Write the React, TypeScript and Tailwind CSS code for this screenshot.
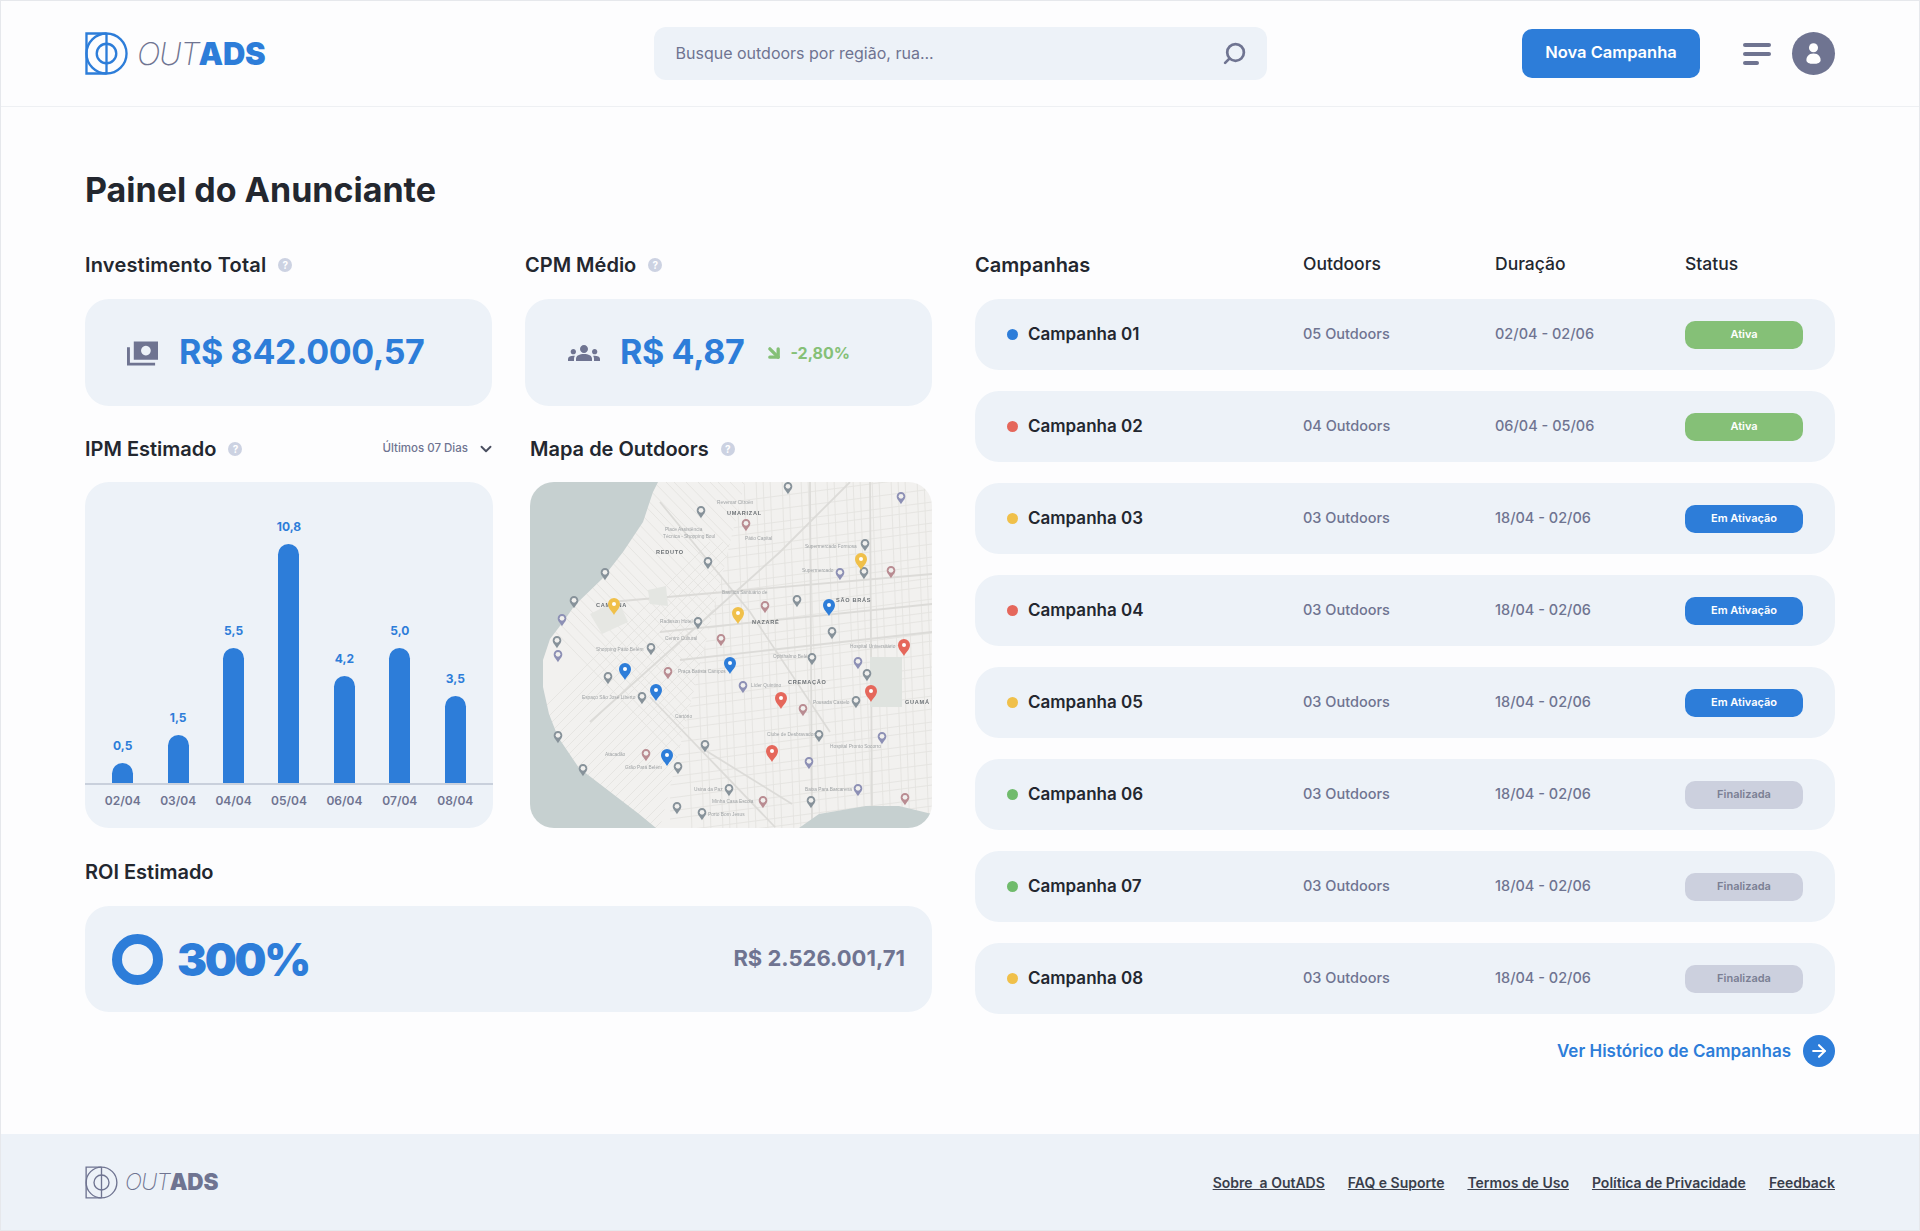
import React from 'react';
import { ArrowDownRight, ArrowRight, ChevronDown, Search } from 'lucide-react';
import { MdGroups } from 'react-icons/md';

const campaigns = [
  { name: 'Campanha 01', dot: 'bg-[#2d7dd9]', outdoors: '05 Outdoors', period: '02/04 - 02/06', status: 'Ativa' },
  { name: 'Campanha 02', dot: 'bg-[#e5675b]', outdoors: '04 Outdoors', period: '06/04 - 05/06', status: 'Ativa' },
  { name: 'Campanha 03', dot: 'bg-[#f0c04a]', outdoors: '03 Outdoors', period: '18/04 - 02/06', status: 'Em Ativação' },
  { name: 'Campanha 04', dot: 'bg-[#e5675b]', outdoors: '03 Outdoors', period: '18/04 - 02/06', status: 'Em Ativação' },
  { name: 'Campanha 05', dot: 'bg-[#f0c04a]', outdoors: '03 Outdoors', period: '18/04 - 02/06', status: 'Em Ativação' },
  { name: 'Campanha 06', dot: 'bg-[#70bb6c]', outdoors: '03 Outdoors', period: '18/04 - 02/06', status: 'Finalizada' },
  { name: 'Campanha 07', dot: 'bg-[#70bb6c]', outdoors: '03 Outdoors', period: '18/04 - 02/06', status: 'Finalizada' },
  { name: 'Campanha 08', dot: 'bg-[#f0c04a]', outdoors: '03 Outdoors', period: '18/04 - 02/06', status: 'Finalizada' },
];

const statusStyle: Record<string, string> = {
  Ativa: 'bg-[#85c077] text-white',
  'Em Ativação': 'bg-[#2d7dd9] text-white',
  Finalizada: 'bg-[#ccd0de] text-[#7b7f94]',
};

const bars = [
  { value: '0,5', date: '02/04', height: 20 },
  { value: '1,5', date: '03/04', height: 48 },
  { value: '5,5', date: '04/04', height: 135 },
  { value: '10,8', date: '05/04', height: 239 },
  { value: '4,2', date: '06/04', height: 107 },
  { value: '5,0', date: '07/04', height: 135 },
  { value: '3,5', date: '08/04', height: 87 },
];

const footerLinks = ['Sobre\u00a0 a OutADS', 'FAQ e Suporte', 'Termos de Uso', 'Política de Privacidade', 'Feedback'];

const colorPins: [number, number, string][] = [
  [84, 123, '#f0c04a'], [208, 132, '#f0c04a'], [331, 78, '#f0c04a'],
  [299, 124, '#2d7dd9'], [95, 188, '#2d7dd9'], [126, 209, '#2d7dd9'], [200, 182, '#2d7dd9'], [137, 274, '#2d7dd9'],
  [374, 164, '#e5675b'], [251, 217, '#e5675b'], [341, 210, '#e5675b'], [242, 270, '#e5675b'],
];

const greyPins: [number, number][] = [
  [258, 5], [371, 15], [171, 29], [216, 42], [335, 62], [178, 80], [310, 91], [334, 90], [361, 89], [75, 91],
  [44, 119], [32, 137], [267, 118], [235, 124], [168, 140], [27, 159], [28, 173], [121, 166], [191, 157], [302, 150],
  [282, 176], [328, 180], [337, 192], [138, 190], [78, 195], [112, 215], [213, 204], [326, 219], [273, 227], [28, 254],
  [289, 253], [352, 255], [175, 263], [116, 272], [148, 285], [53, 287], [279, 280], [199, 307], [233, 319], [147, 325],
  [172, 331], [328, 307], [281, 319], [375, 316],
];
const greyPinColors = ['#87929a', '#8d90b5', '#87929a', '#b98c92', '#87929a'];

const mapLabels: [number, number, string, boolean][] = [
  [197, 33, 'UMARIZAL', true], [126, 72, 'REDUTO', true], [66, 125, 'CAMPINA', true], [222, 142, 'NAZARÉ', true],
  [306, 120, 'SÃO BRÁS', true], [258, 202, 'CREMAÇÃO', true], [375, 222, 'GUAMÁ', true],
  [187, 22, 'Revemar Citroën', false], [135, 49, 'Place Assistência', false], [133, 56, 'Técnica - Shopping Boul', false],
  [215, 58, 'Pátio Capital', false], [275, 66, 'Supermercado Formosa', false], [272, 90, 'Supermercado', false],
  [192, 112, 'Basílica Santuário de', false], [130, 141, 'Radisson Hotel', false], [135, 158, 'Centro Cultural', false],
  [66, 169, 'Shopping Pátio Belém', false], [243, 176, 'Ophthalmo Belém', false], [320, 166, 'Hospital Universitário', false],
  [148, 191, 'Praça Batista Campos', false], [221, 205, 'Líder Quintino', false], [283, 222, 'Pousada Castelo', false],
  [237, 254, 'Clube de Desbravadores', false], [300, 266, 'Hospital Pronto Socorro', false], [52, 217, 'Espaço São José Liberto', false],
  [145, 236, 'Cartório', false], [75, 274, 'Atacadão', false], [95, 287, 'Grão Pará Belém', false], [275, 309, 'Baixa Para Barcarena', false],
  [164, 309, 'Usina da Paz', false], [182, 321, 'Minha Casa Escola', false], [178, 334, 'Porto Bom Jesus', false],
];

// street grid: rotated blocks on the old town side, almost straight ones to the east
const westStreets = Array.from({ length: 44 }, (_, i) => {
  const offset = -120 + i * 10 + (i * 7) % 4;
  return `M${offset} 360L${offset + 300} 60`;
});
const westCross = Array.from({ length: 40 }, (_, i) => {
  const offset = -120 + i * 11 + (i * 5) % 4;
  return `M${offset} 0L${offset + 330} 340`;
});
const eastStreets = Array.from({ length: 32 }, (_, i) => {
  const x = 150 + i * 9 + (i * 3) % 5;
  return `M${x} -5L${x + 12} 350`;
});
const eastCross = Array.from({ length: 32 }, (_, i) => {
  const y = 8 + i * 11 + (i * 7) % 5;
  return `M140 ${y + 20}L410 ${y - 15}`;
});

function HelpDot() {
  return (
    <span className="flex h-[14px] w-[14px] items-center justify-center rounded-full bg-[#ccd2e2] text-[10px] leading-none font-bold text-white">
      ?
    </span>
  );
}

function Logo({ small }: { small?: boolean }) {
  const color = small ? '#6f7491' : '#2d7dd9';
  return (
    <div className={`flex items-center ${small ? 'gap-[7px]' : 'gap-[9px]'}`}>
      <svg viewBox="0 0 44 44" className={small ? 'h-[33px] w-[33px]' : 'h-[43px] w-[43px]'} fill="none" stroke={color} strokeWidth={small ? 1.8 : 2.4}>
        <path d="M22 1.500H1.500V42.500H22" />
        <circle cx="22" cy="22" r="20.500" />
        <circle cx="22" cy="22" r="10" />
        <path d="M22 1.500V42.500" />
      </svg>
      <span className={`flex items-baseline leading-none italic ${small ? 'text-[22.500px]' : 'text-[31px]'}`}>
        <span className="font-extralight tracking-[-0.04em] text-[#6f7491]">OUT</span>
        <span className={`font-black not-italic tracking-[-0.01em] ${small ? 'text-[#6f7491]' : 'text-[#2d7dd9]'}`}>ADS</span>
      </span>
    </div>
  );
}

function BillsIcon() {
  return (
    <svg viewBox="0 0 32 26" className="h-[26px] w-[31px]" fill="#6f7491">
      <path fillRule="evenodd" d="M7 1h25v19H7ZM19.500 5.500a5 5 0 1 0 .01 0Z" />
      <path d="M0 7h3v16h26v3H0Z" />
    </svg>
  );
}

function CityMap() {
  return (
    <svg viewBox="0 0 402 346" className="h-full w-full blur-[0.3px]" preserveAspectRatio="none">
      <defs>
        <clipPath id="westSide"><path d="M0 0H215L130 346H0Z" /></clipPath>
        <clipPath id="eastSide"><path d="M215 0H402V346H130Z" /></clipPath>
      </defs>
      <rect width="402" height="346" fill="#f2f1ef" />
      <g stroke="#e4e3e0" strokeWidth="0.9" fill="none">
        <g clipPath="url(#westSide)">
          {westStreets.map((d) => <path key={d} d={d} />)}
          {westCross.map((d) => <path key={d} d={d} />)}
        </g>
        <g clipPath="url(#eastSide)">
          {eastStreets.map((d) => <path key={d} d={d} />)}
          {eastCross.map((d) => <path key={d} d={d} />)}
        </g>
      </g>
      <g stroke="#dcdbd8" strokeWidth="1.800" fill="none">
        <path d="M130 20 220 130 300 250" />
        <path d="M80 120 402 92" />
        <path d="M130 150 402 122" />
        <path d="M150 178 402 150" />
        <path d="M60 240 250 70 320 0" />
        <path d="M170 265 262 322" />
        <path d="M280 0 282 346" />
        <path d="M340 0 342 330" />
        <path d="M120 215 245 345" />
      </g>
      <path d="M340 175H372V225H340Z" fill="#dfe3df" />
      <path d="M60 132 88 118 98 140 72 152Z" fill="#e6e7e3" />
      <path d="M118 108 136 104 138 124 120 122Z" fill="#e4e6e2" />
      <path d="M0 0H128L123 10 113 40 93 70 72 97 45 123 33 140 20 157 13 178 13 205 19 232 28 255 49 286 79 309 109 332 126 346H0Z" fill="#c6d0d0" />
      <path d="M269 346 289 332 336 324 369 324 402 332V346Z" fill="#c6d0d0" />
      {mapLabels.map(([x, y, text, major]) => (
        <text
          key={text}
          x={x}
          y={y}
          fontFamily="'Liberation Sans', sans-serif"
          fontSize={major ? 5.6 : 4.8}
          fontWeight={major ? 700 : 400}
          letterSpacing={major ? 0.7 : 0}
          fill={major ? '#6d7276' : '#a0a4a6'}
        >
          {text}
        </text>
      ))}
      {greyPins.map(([x, y], i) => (
        <g key={`${x}-${y}`} transform={`translate(${x} ${y}) scale(0.72)`}>
          <path d="M0 10C-2 6-6 3.500-6-1A6 6 0 1 1 6-1C6 3.500 2 6 0 10Z" fill={greyPinColors[i % 5]} />
          <circle cy="-1" r="3.300" fill="#f1f0ee" />
        </g>
      ))}
      {colorPins.map(([x, y, fill]) => (
        <g key={`${x}-${y}`} transform={`translate(${x} ${y})`}>
          <path d="M0 10C-2 6-6 3.500-6-1A6 6 0 1 1 6-1C6 3.500 2 6 0 10Z" fill={fill} />
          <circle cy="-1" r="2" fill="#fff" />
        </g>
      ))}
    </svg>
  );
}

export default function App() {
  return (
    <div className="flex min-h-[1231px] flex-col border border-[#e6e8ec] bg-[#fdfdfe] font-['Inter',sans-serif] text-[#23272f]">
      <header className="grid h-[106px] shrink-0 grid-cols-[1fr_613px_1fr] items-center border-b border-[#eef0f3] px-[84px]">
        <Logo />
        <div className="flex h-[53px] items-center justify-between rounded-xl bg-[#edf2f8] pr-[20px] pl-[22px]">
          <span className="pb-[1px] text-[16px] text-[#6f7491]">Busque outdoors por região, rua...</span>
          <Search className="h-[25px] w-[25px] -scale-x-100 text-[#6f7491]" strokeWidth={2.6} />
        </div>
        <div className="flex items-center justify-end">
          <button className="h-[49px] w-[178px] rounded-[10px] bg-[#2d7dd9] pb-[2px] text-[16.500px] font-semibold text-white">Nova Campanha</button>
          <div className="mr-[21px] ml-[43px] flex w-[28px] flex-col gap-[5px]">
            <span className="h-[4px] w-[28px] rounded-full bg-[#6f7491]" />
            <span className="h-[4px] w-[28px] rounded-full bg-[#6f7491]" />
            <span className="h-[4px] w-[16px] rounded-full bg-[#6f7491]" />
          </div>
          <div className="flex h-[43px] w-[43px] items-center justify-center rounded-full bg-[#6f7491]">
            <svg viewBox="0 0 24 24" className="h-[31px] w-[31px]" fill="#fff">
              <circle cx="12" cy="7.500" r="3.500" />
              <path d="M12 12c4 0 5.500 2.800 5.500 5 0 2-2 3-5.500 3s-5.500-1-5.500-3c0-2.200 1.500-5 5.500-5Z" />
            </svg>
          </div>
        </div>
      </header>

      <main className="px-[84px] pt-[61px]">
        <h1 className="mb-[37px] h-[44px] text-[34px] leading-[44px] font-bold">Painel do Anunciante</h1>
        <div className="grid grid-cols-[847px_860px] gap-x-[43px]">
          <div>
            <div className="grid grid-cols-[407px_407px] gap-x-[33px]">
              <section>
                <h2 className="mb-[18px] flex h-[32px] items-center gap-[12px] text-[20px] font-semibold tracking-[0.01em]">Investimento Total <HelpDot /></h2>
                <div className="flex h-[107px] items-center rounded-3xl bg-[#edf2f8] pl-[42px]">
                  <BillsIcon />
                  <span className="ml-[21px] pb-[2px] text-[34px] font-bold tracking-[-0.01em] text-[#2d7dd9]">R$ 842.000,57</span>
                </div>
              </section>
              <section>
                <h2 className="mb-[18px] flex h-[32px] items-center gap-[12px] text-[20px] font-semibold">CPM Médio <HelpDot /></h2>
                <div className="flex h-[107px] items-center rounded-3xl bg-[#edf2f8] pl-[43px]">
                  <MdGroups className="h-[32px] w-[32px] text-[#6f7491]" />
                  <span className="ml-[20px] pb-[2px] text-[34px] font-bold tracking-[-0.01em] text-[#2d7dd9]">R$ 4,87</span>
                  <ArrowDownRight className="ml-[20px] h-[20px] w-[20px] text-[#85c077]" strokeWidth={4} />
                  <span className="ml-[6px] text-[16px] font-bold text-[#85c077]">-2,80%</span>
                </div>
              </section>
            </div>

            <div className="mt-[27px] grid grid-cols-[408px_402px] gap-x-[37px]">
              <section>
                <div className="mb-[17px] flex h-[32px] items-center justify-between">
                  <h2 className="flex items-center gap-[12px] text-[20px] font-semibold">IPM Estimado <HelpDot /></h2>
                  <span className="-mr-[2px] flex items-center gap-[9px] text-[11.500px] font-medium text-[#6f7491]">
                    Últimos 07 Dias <ChevronDown className="h-[18px] w-[18px] text-[#4a4f60]" strokeWidth={2.5} />
                  </span>
                </div>
                <div className="flex h-[346px] flex-col overflow-hidden rounded-3xl bg-[#edf2f8]">
                  <div className="grid flex-1 grid-cols-7 items-end border-b-2 border-[#c9d0dc] px-[10px]">
                    {bars.map((bar) => (
                      <div key={bar.date} className="flex flex-col items-center">
                        <span className="mb-[10px] text-[12px] leading-[14px] font-bold text-[#2d7dd9]">{bar.value}</span>
                        <div className="w-[21px] rounded-t-full bg-[#2d7dd9]" style={{ height: bar.height }} />
                      </div>
                    ))}
                  </div>
                  <div className="grid h-[43px] grid-cols-7 px-[10px] pt-[8px]">
                    {bars.map((bar) => (
                      <span key={bar.date} className="text-center text-[12px] leading-[16px] font-semibold text-[#6f7491]">{bar.date}</span>
                    ))}
                  </div>
                </div>
              </section>
              <section>
                <h2 className="mb-[17px] flex h-[32px] items-center gap-[12px] text-[20px] font-semibold">Mapa de Outdoors <HelpDot /></h2>
                <div className="h-[346px] overflow-hidden rounded-3xl">
                  <CityMap />
                </div>
              </section>
            </div>

            <section className="mt-[28px]">
              <h2 className="mb-[18px] flex h-[32px] items-center text-[20px] font-semibold">ROI Estimado</h2>
              <div className="flex h-[106px] items-center justify-between rounded-3xl bg-[#edf2f8] px-[27px]">
                <div className="flex items-center gap-[14px]">
                  <span className="h-[51px] w-[51px] rounded-full border-[10px] border-[#2d7dd9]" />
                  <span className="text-[45px] leading-none font-black tracking-[-0.05em] text-[#2d7dd9]">300%</span>
                </div>
                <span className="pb-[2px] text-[22px] font-bold text-[#6f7491]">R$ 2.526.001,71</span>
              </div>
            </section>
          </div>

          <div>
            <div className="mb-[18px] grid h-[32px] grid-cols-[328px_192px_190px_118px] items-center">
              <h2 className="text-[20px] font-semibold">Campanhas</h2>
              <span className="pb-[2px] text-[17.500px] font-medium">Outdoors</span>
              <span className="pb-[2px] text-[17.500px] font-medium">Duração</span>
              <span className="pb-[2px] text-[17.500px] font-medium">Status</span>
            </div>
            <div className="flex flex-col gap-[21px]">
              {campaigns.map((campaign) => (
                <div key={campaign.name} className="grid h-[71px] grid-cols-[296px_192px_190px_118px] items-center rounded-3xl bg-[#edf2f8] pl-[32px]">
                  <div className="flex items-center gap-[10px]">
                    <span className={`h-[11px] w-[11px] rounded-full ${campaign.dot}`} />
                    <span className="text-[17px] font-semibold">{campaign.name}</span>
                  </div>
                  <span className="pb-[1px] text-[14.500px] font-medium text-[#6f7491]">{campaign.outdoors}</span>
                  <span className="pb-[1px] text-[14.500px] font-medium text-[#6f7491]">{campaign.period}</span>
                  <span className={`flex h-[28px] items-center justify-center rounded-[10px] text-[11px] font-semibold ${statusStyle[campaign.status]}`}>
                    {campaign.status}
                  </span>
                </div>
              ))}
            </div>
            <div className="mt-[21px] flex h-[32px] items-center justify-end gap-[12px]">
              <span className="pt-[2px] text-[17px] font-semibold text-[#2d7dd9]">Ver Histórico de Campanhas</span>
              <span className="flex h-[32px] w-[32px] items-center justify-center rounded-full bg-[#2d7dd9]">
                <ArrowRight className="h-[20px] w-[20px] text-white" strokeWidth={2.5} />
              </span>
            </div>
          </div>
        </div>
      </main>

      <footer className="mt-auto flex h-[96px] items-center justify-between bg-[#edf2f8] px-[84px]">
        <Logo small />
        <nav className="flex gap-[23px]">
          {footerLinks.map((link) => (
            <a key={link} className="text-[14px] font-semibold text-[#3a3e4b] underline">{link}</a>
          ))}
        </nav>
      </footer>
    </div>
  );
}
